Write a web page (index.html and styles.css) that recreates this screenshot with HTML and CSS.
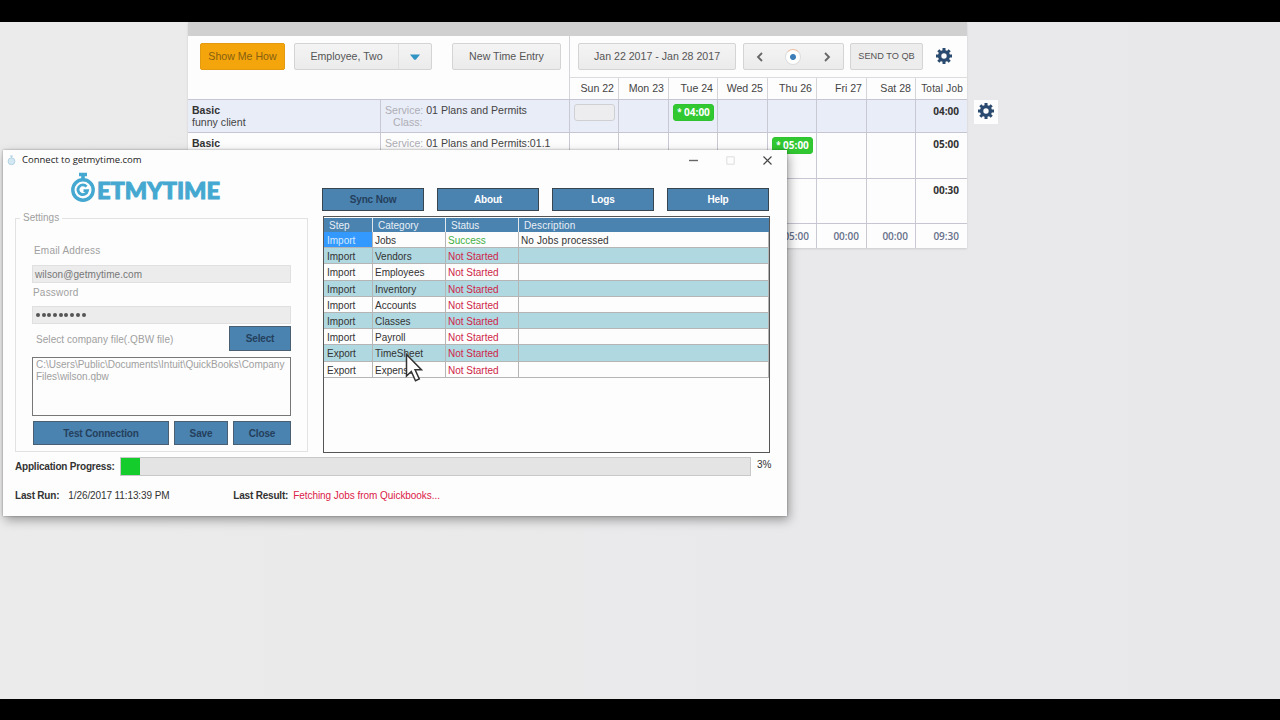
FILE: index.html
```
<!DOCTYPE html>
<html lang="en">
<head>
  <meta charset="UTF-8">
  <meta name="viewport" content="width=device-width, initial-scale=1.0">
  <title>Connect to getmytime.com</title>
  <link rel="stylesheet" href="styles.css">
</head>
<body>
  <svg width="0" height="0" class="defs">
    <symbol id="gear" viewBox="0 0 16 16">
      <g fill="none" stroke="#2b4a70">
        <circle cx="8" cy="8" r="4.4" stroke-width="3.4"/>
        <path d="M8 0v3M8 13v3M0 8h3M13 8h3M2.300 2.300l2 2M11.700 11.700l2 2M2.300 13.700l2-2M11.700 4.300l2-2" stroke-width="3"/>
      </g>
    </symbol>
  </svg>

  <div class="screen">
    <div class="sheet">
      <div class="toolbar">
        <div class="toolbar-left">
          <button type="button" class="btn show-me">Show Me How</button>
          <button type="button" class="btn employee">
            <span class="employee-name">Employee, Two</span>
            <span class="employee-arrow"><svg width="10" height="6" viewBox="0 0 10 6"><path d="M0 0.5h10L6.2 5.2q-1.2 1-2.4 0z" fill="#2f93c4"/></svg></span>
          </button>
          <button type="button" class="btn new-entry">New Time Entry</button>
        </div>
        <div class="toolbar-right">
          <button type="button" class="btn range">Jan 22 2017 - Jan 28 2017</button>
          <div class="btn pager">
            <svg width="8" height="10" viewBox="0 0 8 10"><path d="M6 1L2 5l4 4" fill="none" stroke="#666" stroke-width="1.8"/></svg>
            <span class="today"></span>
            <svg width="8" height="10" viewBox="0 0 8 10"><path d="M2 1l4 4-4 4" fill="none" stroke="#666" stroke-width="1.8"/></svg>
          </div>
          <button type="button" class="btn send">SEND TO QB</button>
          <svg class="gear" width="16" height="16"><use href="#gear"/></svg>
        </div>
        <div class="days">
          <span>Sun 22</span><span>Mon 23</span><span>Tue 24</span><span>Wed 25</span><span>Thu 26</span><span>Fri 27</span><span>Sat 28</span><span class="total-head">Total Job</span>
        </div>
      </div>

      <div class="row row-first">
        <div class="client"><b>Basic</b>funny client</div>
        <div class="service"><div><i>Service:</i> 01 Plans and Permits</div><div><i class="indent">Class:</i></div></div>
        <div class="cell"><span class="entry"></span></div>
        <div class="cell"></div>
        <div class="cell"><span class="entry filled"><sup>*</sup> 04:00</span></div>
        <div class="cell"></div>
        <div class="cell"></div>
        <div class="cell"></div>
        <div class="cell"></div>
        <div class="cell total">04:00</div>
        <div class="row-gear"><svg width="16" height="16"><use href="#gear"/></svg></div>
      </div>
      <div class="row row-tall">
        <div class="client"><b>Basic</b></div>
        <div class="service"><div><i>Service:</i> 01 Plans and Permits:01.1</div></div>
        <div class="cell"></div>
        <div class="cell"></div>
        <div class="cell"></div>
        <div class="cell"></div>
        <div class="cell"><span class="entry filled"><sup>*</sup> 05:00</span></div>
        <div class="cell"></div>
        <div class="cell"></div>
        <div class="cell total">05:00</div>
      </div>
      <div class="row row-tall">
        <div class="client"></div>
        <div class="service"></div>
        <div class="cell"></div>
        <div class="cell"></div>
        <div class="cell"></div>
        <div class="cell"></div>
        <div class="cell"></div>
        <div class="cell"></div>
        <div class="cell"></div>
        <div class="cell total">00:30</div>
      </div>
      <div class="row row-sum">
        <div class="client"></div>
        <div class="service"></div>
        <div class="cell"></div>
        <div class="cell"></div>
        <div class="cell"></div>
        <div class="cell"></div>
        <div class="cell">05:00</div>
        <div class="cell">00:00</div>
        <div class="cell">00:00</div>
        <div class="cell total">09:30</div>
      </div>
    </div>

    <div class="window">
      <div class="titlebar">
        <svg class="app-icon" width="9" height="11" viewBox="0 0 9 11"><circle cx="4.5" cy="6.3" r="3.4" fill="#d3e8f2" stroke="#b4d3e3"/><path d="M3 1h3M4.5 1v2" stroke="#b4d3e3" stroke-width="1.2"/></svg>
        <span class="title">Connect to getmytime.com</span>
        <span class="controls">
          <svg width="9" height="9" viewBox="0 0 9 9"><path d="M0 4.500h9" stroke="#666" stroke-width="1.4"/></svg>
          <svg width="9" height="9" viewBox="0 0 9 9"><path d="M.8.8h7.4v7.4H.8z" fill="none" stroke="#ddd"/></svg>
          <svg width="9" height="9" viewBox="0 0 9 9"><path d="M.5.5l8 8M8.500.5l-8 8" stroke="#444" stroke-width="1.1"/></svg>
        </span>
      </div>

      <div class="main">
        <div class="left">
          <svg class="logo" width="154" height="32" viewBox="0 0 154 32">
            <g fill="none" stroke="#44a8d1">
              <circle cx="13" cy="18" r="10.200" stroke-width="3.400"/>
              <path d="M9 2.500h8M13 4v5" stroke-width="3.600"/>
              <path d="M16.500 14.700a4.800 4.800 0 1 0 1 4h-4" stroke-width="2.800"/>
            </g>
            <text x="27" y="26.500" textLength="123" lengthAdjust="spacingAndGlyphs">ETMYTIME</text>
          </svg>

          <div class="settings">
            <span class="legend">Settings</span>
            <label class="email-label">Email Address</label>
            <div class="input">wilson@getmytime.com</div>
            <label class="password-label">Password</label>
            <div class="input dots"><s></s><s></s><s></s><s></s><s></s><s></s><s></s><s></s><s></s></div>
            <div class="file-row">
              <label class="file-label">Select company file(.QBW file)</label>
              <button type="button" class="blue disabled">Select</button>
            </div>
            <div class="path">C:\Users\Public\Documents\Intuit\QuickBooks\Company<br>Files\wilson.qbw</div>
            <div class="actions">
              <button type="button" class="blue disabled">Test Connection</button>
              <button type="button" class="blue disabled">Save</button>
              <button type="button" class="blue disabled">Close</button>
            </div>
          </div>
        </div>

        <div class="right">
          <div class="menu">
            <button type="button" class="blue disabled">Sync Now</button>
            <button type="button" class="blue">About</button>
            <button type="button" class="blue">Logs</button>
            <button type="button" class="blue">Help</button>
          </div>
          <div class="grid">
            <div class="grid-row head"><span>Step</span><span>Category</span><span>Status</span><span>Description</span></div>
            <div class="grid-row"><span class="selected">Import</span><span>Jobs</span><span class="ok">Success</span><span>No Jobs processed</span></div>
            <div class="grid-row alt"><span>Import</span><span>Vendors</span><span class="wait">Not Started</span><span></span></div>
            <div class="grid-row"><span>Import</span><span>Employees</span><span class="wait">Not Started</span><span></span></div>
            <div class="grid-row alt"><span>Import</span><span>Inventory</span><span class="wait">Not Started</span><span></span></div>
            <div class="grid-row"><span>Import</span><span>Accounts</span><span class="wait">Not Started</span><span></span></div>
            <div class="grid-row alt"><span>Import</span><span>Classes</span><span class="wait">Not Started</span><span></span></div>
            <div class="grid-row"><span>Import</span><span>Payroll</span><span class="wait">Not Started</span><span></span></div>
            <div class="grid-row alt"><span>Export</span><span>TimeSheet</span><span class="wait">Not Started</span><span></span></div>
            <div class="grid-row"><span>Export</span><span>Expense</span><span class="wait">Not Started</span><span></span></div>
          </div>
        </div>
      </div>

      <div class="progress">
        <b>Application Progress:</b>
        <div class="bar"><div class="bar-fill" style="width: 3%"></div></div>
        <span class="percent">3%</span>
      </div>
      <div class="status">
        <b>Last Run:</b><span class="run">1/26/2017 11:13:39 PM</span>
        <b>Last Result:</b><span class="result">Fetching Jobs from Quickbooks...</span>
      </div>
    </div>

    <svg class="cursor" width="18" height="30" viewBox="0 0 18 30"><path d="M1.500 1.500v21.500l4.800-4.500 4.200 9.300 3.800-1.800-4.200-9.200h6.300z" fill="#fff" stroke="#333" stroke-width="1.500"/></svg>
  </div>
</body>
</html>
```
FILE: styles.css
```
* {
  box-sizing: border-box;
}

body {
  margin: 0;
  padding: 22px 0 21px;
  height: 720px;
  background-color: #000;
  font-family: "Liberation Sans", Arial, sans-serif;
  font-size: 10.600px;
  color: #444;
  overflow: hidden;
}

.defs {
  position: absolute;
}

button {
  font-family: inherit;
  padding: 0;
}

.screen {
  position: relative;
  height: 677px;
  background: linear-gradient(90deg, #ebebeb, #e8e8eb);
  overflow: hidden;
}

/* timesheet page behind the dialog */
.sheet {
  width: 779px;
  margin-left: 188px;
  border-top: 14px solid #d0d0d0;
  background-color: #fdfdfd;
  box-shadow: 0 1px 2px rgba(0, 0, 0, 0.12);
}

.toolbar {
  display: grid;
  grid-template-columns: 381px 398px;
  grid-template-rows: 42px 21px;
}

.toolbar-left {
  grid-row: span 2;
  display: flex;
  align-items: flex-start;
  padding: 7px 0 0 12px;
}

.toolbar-right {
  display: flex;
  align-items: flex-start;
  padding: 7px 0 0 8px;
  border-left: 1px solid #d5d5d9;
  border-bottom: 1px solid #dcdce0;
}

.btn {
  height: 27px;
  padding-bottom: 1px;
  font-size: 10.600px;
  color: #555;
  background: linear-gradient(#f4f4f4, #ebebeb);
  border: 1px solid #d4d4d4;
  border-radius: 2px;
}

.show-me {
  width: 85px;
  color: #86600f;
  background: #f5a50c;
  border-color: #e39a10;
}

.employee {
  display: flex;
  align-items: center;
  width: 138px;
  margin-left: 9px;
}

.employee-name {
  width: 103px;
}

.employee-arrow {
  flex: 1;
  height: 25px;
  padding-top: 6px;
  border-left: 1px solid #e0e0e0;
}

.new-entry {
  width: 109px;
  margin-left: 20px;
}

.range {
  width: 158px;
}

.pager {
  display: flex;
  align-items: center;
  justify-content: space-between;
  width: 101px;
  margin-left: 7px;
  padding: 1px 12px 0;
}

.today {
  width: 16px;
  height: 16px;
  margin-right: 2px;
  border: 1px solid #ddd;
  border-top-color: #ecc0a4;
  border-radius: 50%;
  background: radial-gradient(circle, #3c7fb8 0 2.5px, #fff 3.5px);
}

.send {
  width: 73px;
  margin-left: 6px;
  font-size: 9.200px;
  background: #ededed;
}

.gear {
  margin: 5px 0 0 13px;
}

.days,
.row {
  display: grid;
}

.days {
  grid-template-columns: 49px 50px 49px 50px 49px 50px 49px 52px;
  border-left: 1px solid #d5d5d9;
}

.days span {
  padding: 4px 4px 0 0;
  text-align: right;
  line-height: 13px;
  white-space: nowrap;
  border-right: 1px solid #d5d5d9;
}

.days .total-head {
  padding: 4px 5px 0 0;
  font-size: 10px;
  letter-spacing: 0.2px;
  border-right: none;
}

.row {
  position: relative;
  grid-template-columns: 192px 189px 49px 50px 49px 50px 49px 50px 49px 52px;
  border-top: 1px solid #c6c6d2;
}

.row-first {
  height: 33px;
  background-color: #e9edf8;
}

.row-tall {
  height: 45.500px;
}

.row-sum {
  height: 25px;
}

.client,
.service {
  padding: 4px 4px 0;
  line-height: 12px;
}

.client b {
  display: block;
  font-size: 10.500px;
  color: #333;
}

.service i {
  font-style: normal;
  color: #adadb5;
}

.service {
  border-left: 1px solid #c9c9d4;
}

.service .indent {
  margin-left: 8px;
}

.cell {
  display: flex;
  justify-content: flex-end;
  padding: 4px 3px 0 0;
  font-family: "Open Sans", sans-serif;
  font-size: 10px;
  border-left: 1px solid #c9c9d4;
}

.cell.total {
  padding: 4px 8px 0 0;
  font-weight: bold;
  line-height: 14px;
  color: #333;
}

.row-sum .cell {
  padding: 5px 7px 0 0;
  font-weight: 600;
  line-height: 14px;
  color: #66708a;
}

.row-sum .total {
  padding-right: 8px;
}

.entry {
  width: 41px;
  height: 17px;
  border: 1px solid #d0d0d4;
  border-radius: 3px;
  background-color: #ededef;
}

.entry.filled {
  border-color: #2fc42f;
  background-color: #32c832;
  color: #fff;
  font-weight: bold;
  line-height: 15px;
  text-align: center;
  white-space: nowrap;
}

.entry sup {
  font-size: 8px;
  line-height: 0;
  vertical-align: 1px;
}

/* gear button that hangs outside the highlighted row */
.row-gear {
  position: absolute;
  left: 786px;
  top: 0;
  width: 24px;
  height: 24px;
  padding: 3px 4px;
  background-color: #fdfdfd;
}

/* sync dialog */
.window {
  position: absolute;
  left: 3px;
  top: 128px;
  width: 784px;
  height: 366px;
  background-color: #fdfdfd;
  font-size: 10px;
  color: #333;
  box-shadow: 0 0 2px rgba(0, 0, 0, 0.35), 2px 4px 10px rgba(0, 0, 0, 0.35);
}

.titlebar {
  display: flex;
  align-items: center;
  height: 20px;
  padding: 0 15px 0 4px;
}

.title {
  margin: -2px 0 0 6px;
  font-family: "Open Sans", sans-serif;
  font-size: 9.500px;
  color: #222;
}

.controls {
  display: flex;
  gap: 28px;
  margin-left: auto;
}

.main {
  display: flex;
  height: 283px;
  padding: 0 16px 0 12px;
}

.left {
  width: 293px;
}

.logo {
  display: block;
  margin: 2px 0 0 55px;
}

.logo text {
  font-family: Lato, sans-serif;
  font-weight: 900;
  font-size: 22px;
  fill: #44a8d1;
  stroke: #44a8d1;
  stroke-width: 0.9px;
}

.settings {
  position: relative;
  height: 234px;
  margin-top: 14px;
  padding: 26px 16px 0 16px;
  border: 1px solid #e2e2e2;
  color: #a0a0a0;
}

.legend {
  position: absolute;
  left: 4px;
  top: -7px;
  padding: 0 3px;
  background-color: #fdfdfd;
}

.settings label {
  display: block;
  line-height: 12px;
  letter-spacing: 0.200px;
}

.email-label {
  padding-left: 2px;
}

.input {
  height: 18px;
  padding-left: 2px;
  border: 1px solid #e0e0e0;
  background-color: #ececec;
  color: #777;
  line-height: 17px;
  letter-spacing: 0.070px;
}

.email-label + .input {
  margin-top: 8px;
}

.settings .password-label {
  padding: 4px 0 0 1px;
}

.dots {
  display: flex;
  align-items: center;
  gap: 1.700px;
  margin-top: 7px;
  padding-left: 3px;
}

.dots s {
  width: 4px;
  height: 4px;
  border-radius: 50%;
  background-color: #555;
}

.file-row {
  display: flex;
  justify-content: space-between;
  align-items: center;
  margin-top: 2px;
  padding-left: 4px;
}

.settings .file-label {
  margin-top: 2px;
  letter-spacing: 0.060px;
}

.file-row .blue {
  width: 62px;
  height: 25px;
}

.blue {
  height: 24px;
  border: 1px solid #4b5f72;
  background-color: #4a82b0;
  color: #fff;
  font-size: 10px;
  font-weight: bold;
  letter-spacing: -0.150px;
}

.blue.disabled {
  color: #24405c;
}

.path {
  height: 59px;
  margin-top: 6px;
  padding: 1px 3px;
  border: 1px solid #777;
  line-height: 12px;
  letter-spacing: 0;
  white-space: nowrap;
}

.actions {
  display: grid;
  grid-template-columns: 136px 54px 58px;
  gap: 5px;
  margin: 5px 0 0 1px;
}

.right {
  width: 448px;
  margin-left: 14px;
  padding-top: 18px;
}

.menu {
  display: grid;
  grid-template-columns: repeat(4, 1fr);
  gap: 13px;
  padding: 0 1px 0 0;
}

.menu .blue {
  height: 23px;
  border-color: #36454f;
}

.grid {
  height: 237px;
  margin: 5px 0 0 1px;
  padding-top: 1px;
  border: 1px solid #555;
}

.grid-row {
  display: grid;
  grid-template-columns: 49px 73px 73px 1fr;
  grid-template-rows: 100%;
  height: 16.200px;
  color: #333;
}

.grid-row span {
  padding-left: 2px;
  line-height: 17px;
  letter-spacing: 0;
  border-right: 1px solid #b5b5b5;
  border-bottom: 1px solid #b5b5b5;
}

.grid-row span:first-child {
  padding-left: 3px;
}

.grid-row.alt {
  background-color: #b0d8e1;
}

.grid-row.head {
  height: 14px;
  background-color: #4a82b0;
  color: #e8f0f6;
}

.grid-row.head span {
  padding-left: 5px;
  line-height: 15px;
  border-bottom: none;
  border-color: #e0e8ee;
}

.grid-row span:last-child {
  letter-spacing: 0.130px;
}

.grid-row.head span:last-child {
  border-right: none;
}

.grid-row .selected {
  background-color: #3399ff;
  color: #d6eaff;
}

.grid-row .ok {
  color: #43b043;
}

.grid-row .wait {
  color: #cf1f48;
}

.progress {
  display: flex;
  align-items: center;
  height: 20px;
  margin-top: 3px;
  padding-left: 12px;
}

.progress b {
  width: 105px;
}

.progress b,
.status b {
  letter-spacing: -0.200px;
}

.bar {
  width: 631px;
  height: 19px;
  border: 1px solid #c8c8c8;
  background-color: #e4e4e4;
}

.bar-fill {
  height: 100%;
  background-color: #14cc2c;
}

.percent {
  margin: -4px 0 0 6px;
}

.status {
  display: flex;
  margin-top: 14px;
  padding-left: 12px;
  line-height: 12px;
}

.run {
  width: 165px;
  margin-left: 9px;
  letter-spacing: -0.100px;
}

.result {
  margin-left: 5px;
  letter-spacing: -0.050px;
  color: #dc2048;
}

.cursor {
  position: absolute;
  left: 405px;
  top: 331px;
}
```
